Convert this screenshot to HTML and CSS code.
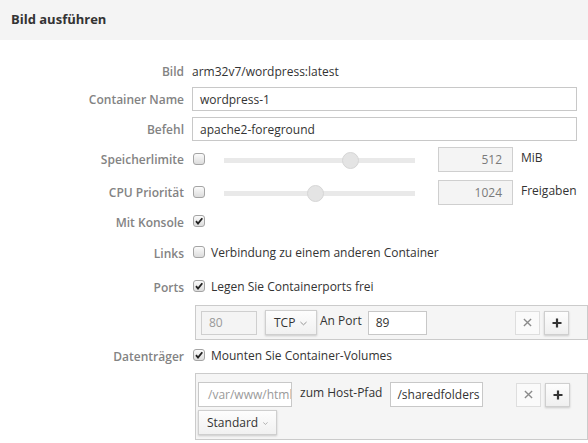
FILE: index.html
```html
<!DOCTYPE html>
<html lang="de">
<head>
<meta charset="utf-8">
<title>Bild ausführen</title>
<link rel="stylesheet" href="styles.css">
</head>
<body>
<div class="header">Bild ausführen</div>
<div class="form">
  <div class="label">Bild</div>
  <div class="field"><span class="value">arm32v7/wordpress:latest</span></div>

  <div class="label">Container Name</div>
  <div class="field"><div class="input wide">wordpress-1</div></div>

  <div class="label">Befehl</div>
  <div class="field"><div class="input wide">apache2-foreground</div></div>

  <div class="label">Speicherlimite</div>
  <div class="field">
    <span class="cb"></span>
    <div class="slider"><div class="track"></div><div class="thumb" style="left: 66%"></div></div>
    <div class="num">512</div>
    <span class="unit">MiB</span>
  </div>

  <div class="label">CPU Priorität</div>
  <div class="field">
    <span class="cb"></span>
    <div class="slider"><div class="track"></div><div class="thumb" style="left: 47.6%"></div></div>
    <div class="num">1024</div>
    <span class="unit">Freigaben</span>
  </div>

  <div class="label">Mit Konsole</div>
  <div class="field"><span class="cb checked"><svg viewBox="0 0 12 12" width="12" height="12"><path d="M3 6.2 L5 8.6 L9.3 3.2" fill="none" stroke="#222" stroke-width="1.8"/></svg></span></div>

  <div class="label">Links</div>
  <div class="field"><span class="cb"></span><span class="cbtext">Verbindung zu einem anderen Container</span></div>

  <div class="label">Ports</div>
  <div class="field"><span class="cb checked"><svg viewBox="0 0 12 12" width="12" height="12"><path d="M3 6.2 L5 8.6 L9.3 3.2" fill="none" stroke="#222" stroke-width="1.8"/></svg></span><span class="cbtext">Legen Sie Containerports frei</span></div>

  <div class="label"></div>
  <div class="field panel-cell">
    <div class="panel ports">
      <div class="input dis w80">80</div>
      <div class="select tcp">TCP <svg viewBox="0 0 8 5" width="7" height="5"><path d="M0.5 0.8 L4 4 L7.5 0.8" fill="none" stroke="#888" stroke-width="1"/></svg></div>
      <span class="inline-label an">An Port</span>
      <div class="input w89">89</div>
      <div class="spacer"></div>
      <div class="btn del"><svg viewBox="0 0 10 10" width="9" height="9"><path d="M1 1 L9 9 M9 1 L1 9" stroke="#8a8a8a" stroke-width="1.5"/></svg></div>
      <div class="btn add"><svg viewBox="0 0 10 10" width="10" height="10"><path d="M5 0.5 V9.5 M0.5 5 H9.5" stroke="#333" stroke-width="2.2"/></svg></div>
    </div>
  </div>

  <div class="label">Datenträger</div>
  <div class="field"><span class="cb checked"><svg viewBox="0 0 12 12" width="12" height="12"><path d="M3 6.2 L5 8.6 L9.3 3.2" fill="none" stroke="#222" stroke-width="1.8"/></svg></span><span class="cbtext">Mounten Sie Container-Volumes</span></div>

  <div class="label"></div>
  <div class="field panel-cell">
    <div class="panel vols">
      <div class="vol-line">
        <div class="input ph wvar">/var/www/html</div>
        <span class="inline-label host">zum Host-Pfad</span>
        <div class="input wshared">/sharedfolders</div>
        <div class="spacer"></div>
        <div class="btn del"><svg viewBox="0 0 10 10" width="9" height="9"><path d="M1 1 L9 9 M9 1 L1 9" stroke="#8a8a8a" stroke-width="1.5"/></svg></div>
        <div class="btn add"><svg viewBox="0 0 10 10" width="10" height="10"><path d="M5 0.5 V9.5 M0.5 5 H9.5" stroke="#333" stroke-width="2.2"/></svg></div>
      </div>
      <div class="select std">Standard <svg viewBox="0 0 8 5" width="7" height="5"><path d="M0.5 0.8 L4 4 L7.5 0.8" fill="none" stroke="#888" stroke-width="1"/></svg></div>
    </div>
  </div>
</div>
</body>
</html>
```
FILE: styles.css
```css
* { box-sizing: border-box; }
html, body { margin: 0; padding: 0; background: #fff; }
body {
  font-family: "Open Sans", "Liberation Sans", sans-serif;
  font-size: 12px;
  color: #333;
  width: 588px;
  height: 443px;
  overflow: hidden;
}
.header {
  height: 40px;
  background: #f4f4f4;
  padding-left: 11px;
  line-height: 38px;
  font-size: 13px;
  font-weight: 700;
  color: #333;
}
.form {
  display: grid;
  grid-template-columns: 184px 1fr;
  column-gap: 8px;
  grid-template-rows: 28px 28px 32px 29px 37px 22px 40px 28px 43px 24px 75px;
  padding-top: 17px;
}
.label {
  text-align: right;
  color: #838383;
  font-weight: 600;
  display: flex;
  align-items: center;
  justify-content: flex-end;
}
.field {
  display: flex;
  align-items: center;
  min-width: 0;
}
.value { color: #333; }
.input {
  height: 24px;
  border: 1px solid #c8c8c8;
  background: #fff;
  padding: 0 7px;
  display: flex;
  align-items: center;
  color: #333;
  white-space: nowrap;
  overflow: hidden;
}
.input.wide { width: 385px; }
.cb {
  width: 12px;
  height: 12px;
  border: 1px solid #a4a4a4;
  border-radius: 3px;
  background: linear-gradient(#fbfbfb, #dcdcdc);
  margin-left: 1px;
  margin-top: -2px;
  flex: none;
  position: relative;
  display: block;
}
.cb.checked svg { position: absolute; left: -1px; top: -1px; }
.cbtext { margin-left: 6px; margin-top: -2px; color: #333; }
.slider {
  position: relative;
  width: 191px;
  height: 16px;
  margin-left: 19px;
}
.track {
  position: absolute;
  left: 0; right: 0; top: 6px;
  height: 5px;
  background: #e9e9e9;
}
.thumb {
  position: absolute;
  top: 0;
  width: 17px;
  height: 17px;
  margin-left: -8px;
  border-radius: 50%;
  background: #e4e4e4;
  border: 1px solid #d6d6d6;
}
.num {
  width: 75px;
  height: 25px;
  margin-left: 23px;
  border: 1px solid #cfcfcf;
  background: #f4f4f4;
  color: #7a7a7a;
  text-align: right;
  padding-right: 10px;
  line-height: 23px;
}
.unit { margin-left: 8px; margin-top: -5px; color: #333; }
.panel-cell { align-items: flex-start; }
.panel {
  background: #f5f5f5;
  border: 1px solid #cbcbcb;
  margin-left: 3px;
  width: 393px;
}
.panel.ports {
  margin-top: 4px;
  height: 35px;
  display: flex;
  align-items: center;
  padding: 0 18px 0 5px;
}
.input.dis { background: #f4f4f4; color: #9a9a9a; border-color: #cfcfcf; }
.w80 { width: 56px; }
.select {
  height: 25px;
  border: 1px solid #cfcfcf;
  background: linear-gradient(#fdfdfd, #f1f1f1);
  box-shadow: 0 1px 2px rgba(0,0,0,0.18);
  display: flex;
  align-items: center;
  gap: 5px;
  padding: 0 8px;
  color: #333;
}
.select svg { margin-top: 1px; }
.tcp { width: 52px; margin-left: 8px; }
.inline-label { color: #333; margin-top: -5px; }
.an { margin-left: 3px; }
.w89 { width: 59px; margin-left: 6px; }
.spacer { flex: 1; }
.btn {
  width: 25px;
  height: 24px;
  display: flex;
  align-items: center;
  justify-content: center;
}
.btn.del { border: 1px solid #dedede; background: #fafafa; }
.btn.add {
  margin-left: 4px;
  border: 1px solid #cfcfcf;
  background: linear-gradient(#fdfdfd, #efefef);
  box-shadow: 0 1px 2px rgba(0,0,0,0.18);
}
.panel.vols {
  margin-top: 5px;
  height: 67px;
  padding: 8px 17px 0 2px;
}
.vol-line { display: flex; align-items: center; height: 25px; }
.input.ph { color: #9a9a9a; height: 25px; }
.wvar { width: 94px; padding: 0 0 0 9px; }
.host { margin-left: 8px; }
.wshared { width: 93px; height: 25px; margin-left: 8px; padding: 0 6px; }
.std { width: 79px; margin-top: 3px; }
```
